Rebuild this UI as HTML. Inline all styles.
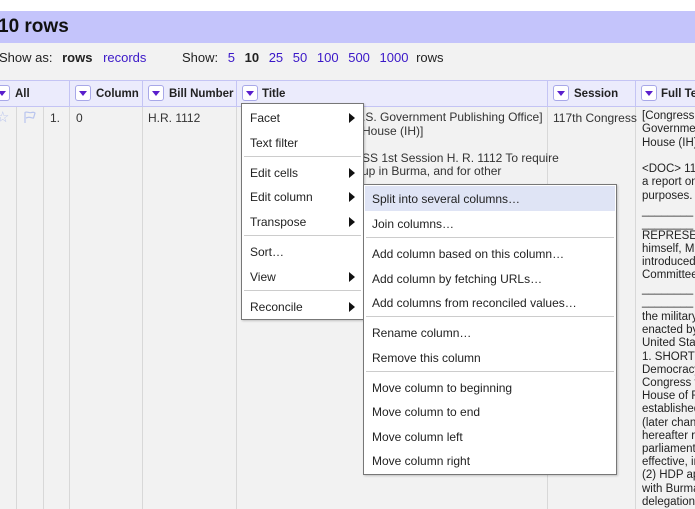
<!DOCTYPE html>
<html><head><style>
*{margin:0;padding:0;box-sizing:border-box}
body{width:695px;height:509px;overflow:hidden;background:#f2f2f2;font-family:"Liberation Sans",Arial,sans-serif;position:relative;color:#222}
.a{position:absolute;white-space:nowrap}
.hdr{top:11px;left:0;width:695px;height:32px;background:#c4c4fb}
.tb{top:43px;left:0;width:695px;height:37px;background:#f2f2f2}
.ch{top:80px;left:0;width:695px;height:27px;background:#ebebfc;border-top:1px solid #c4c4f4;border-bottom:1px solid #c4c4f4}
.vl{position:absolute;width:1px;background:#d8d8d8}
.hv{position:absolute;width:1px;background:#c4c4f4;top:80px;height:27px}
.btn{position:absolute;top:85px;width:16px;height:16px;border:1px solid #a8a8e8;border-radius:3px;background:#fff}
.btn:after{content:"";position:absolute;left:3px;top:5px;border-left:4px solid transparent;border-right:4px solid transparent;border-top:5px solid #5a1fcc}
.hl{font-size:11.5px;font-weight:bold;top:88px}
.lnk{color:#3a17c8}
.t12{font-size:12px;color:#333}
.menu{position:absolute;background:#fff;border:1px solid #777;box-shadow:1px 1px 2px rgba(0,0,0,.2)}
.mi{position:absolute;font-size:12px;color:#222;white-space:nowrap}
.sep{position:absolute;height:1px;background:#ccc}
.arr{position:absolute;border-top:5px solid transparent;border-bottom:5px solid transparent;border-left:6px solid #111}
.ft{position:absolute;left:642px;font-size:11.5px;line-height:13.3px;color:#222;white-space:pre}
</style></head><body>
<div class="a" style="top:0;left:0;width:695px;height:11px;background:#fff"></div>
<div class="a hdr"></div>
<div class="a" style="top:16px;left:-2px;font-size:19px;font-weight:bold;color:#111">10 rows</div>
<div class="a tb"></div>
<div class="a" style="top:50px;left:-1px;font-size:13px;color:#222">Show as: <b style="margin-left:6px">rows</b> <span class="lnk" style="margin-left:7px">records</span></div>
<div class="a" style="top:50px;left:182px;font-size:13px;color:#222">Show: <span class="lnk" style="margin-left:6px">5</span> <b style="margin-left:6px">10</b> <span class="lnk" style="margin-left:6px">25</span> <span class="lnk" style="margin-left:6px">50</span> <span class="lnk" style="margin-left:6px">100</span> <span class="lnk" style="margin-left:6px">500</span> <span class="lnk" style="margin-left:6px">1000</span> <span style="margin-left:4px">rows</span></div>
<div class="a ch"></div>
<div class="hv" style="left:69px"></div><div class="hv" style="left:142px"></div><div class="hv" style="left:236px"></div><div class="hv" style="left:547px"></div><div class="hv" style="left:635px"></div>
<div class="vl" style="left:16px;top:107px;height:402px"></div>
<div class="vl" style="left:43px;top:107px;height:402px"></div>
<div class="vl" style="left:69px;top:107px;height:402px"></div>
<div class="vl" style="left:142px;top:107px;height:402px"></div>
<div class="vl" style="left:236px;top:107px;height:402px"></div>
<div class="vl" style="left:547px;top:107px;height:402px"></div>
<div class="vl" style="left:635px;top:107px;height:402px"></div>
<div class="btn" style="left:-6px"></div><div class="a hl" style="left:15px">All</div>
<div class="btn" style="left:75px"></div><div class="a hl" style="left:96px">Column</div>
<div class="btn" style="left:148px"></div><div class="a hl" style="left:169px">Bill Number</div>
<div class="btn" style="left:242px"></div><div class="a hl" style="left:262px">Title</div>
<div class="btn" style="left:553px"></div><div class="a hl" style="left:574px">Session</div>
<div class="btn" style="left:641px"></div><div class="a hl" style="left:661px">Full Text</div>
<div class="a" style="left:-4px;top:108px;font-size:15px;color:#b8c4ee">☆</div>
<svg class="a" style="left:23px;top:110px" width="14" height="14" viewBox="0 0 14 14"><path d="M2 13V2.5C4 1 6 3.5 8.5 2.5 10 2 11.5 2.5 12 3L10.5 8C9 8.5 7 6.5 4.5 7.5L3 8" fill="none" stroke="#b8c4ee" stroke-width="1.2"/></svg>
<div class="a t12" style="left:50px;top:111px">1.</div>
<div class="a t12" style="left:76px;top:111px">0</div>
<div class="a t12" style="left:148px;top:111px">H.R. 1112</div>
<div class="a t12" style="left:362px;top:111px;line-height:13.5px;white-space:pre">.S. Government Publishing Office]
House (IH)]

SS 1st Session H. R. 1112 To require
up in Burma, and for other</div>
<div class="a t12" style="left:553px;top:111px">117th Congress</div>
<div class="ft" style="top:110px">[Congressional
Government
House (IH)

&lt;DOC&gt; 117
a report on
purposes.</div>
<div class="ft" style="top:205px">________
________</div>
<div class="ft" style="top:230px;line-height:13px">REPRESENT
himself, Mr
introduced
Committee</div>
<div class="ft" style="top:283px">________
________</div>
<div class="ft" style="top:311px;line-height:13.2px">the military
enacted by
United States
1. SHORT
Democracy
Congress f
House of R
established
(later chang
hereafter re
parliaments
effective, in
(2) HDP ap
with Burma
delegation</div>

<div class="menu" style="left:241px;top:103px;width:123px;height:217px">
<div class="mi" style="left:8px;top:7px">Facet</div><div class="arr" style="left:107px;top:9px"></div>
<div class="mi" style="left:8px;top:32px">Text filter</div>
<div class="sep" style="left:2px;right:2px;top:52px"></div>
<div class="mi" style="left:8px;top:62px">Edit cells</div><div class="arr" style="left:107px;top:64px"></div>
<div class="mi" style="left:8px;top:86px">Edit column</div><div class="arr" style="left:107px;top:88px"></div>
<div class="mi" style="left:8px;top:111px">Transpose</div><div class="arr" style="left:107px;top:113px"></div>
<div class="sep" style="left:2px;right:2px;top:131px"></div>
<div class="mi" style="left:8px;top:141px">Sort…</div>
<div class="mi" style="left:8px;top:166px">View</div><div class="arr" style="left:107px;top:168px"></div>
<div class="sep" style="left:2px;right:2px;top:186px"></div>
<div class="mi" style="left:8px;top:196px">Reconcile</div><div class="arr" style="left:107px;top:198px"></div>
</div>

<div class="menu" style="left:363px;top:184px;width:254px;height:291px">
<div class="a" style="left:1px;top:1px;width:250px;height:25px;background:#dfe4f5"></div>
<div class="mi" style="left:8px;top:7px">Split into several columns…</div>
<div class="mi" style="left:8px;top:32px">Join columns…</div>
<div class="sep" style="left:2px;right:2px;top:52px"></div>
<div class="mi" style="left:8px;top:62px">Add column based on this column…</div>
<div class="mi" style="left:8px;top:87px">Add column by fetching URLs…</div>
<div class="mi" style="left:8px;top:111px">Add columns from reconciled values…</div>
<div class="sep" style="left:2px;right:2px;top:131px"></div>
<div class="mi" style="left:8px;top:141px">Rename column…</div>
<div class="mi" style="left:8px;top:166px">Remove this column</div>
<div class="sep" style="left:2px;right:2px;top:186px"></div>
<div class="mi" style="left:8px;top:196px">Move column to beginning</div>
<div class="mi" style="left:8px;top:220px">Move column to end</div>
<div class="mi" style="left:8px;top:245px">Move column left</div>
<div class="mi" style="left:8px;top:269px">Move column right</div>
</div>
</body></html>
